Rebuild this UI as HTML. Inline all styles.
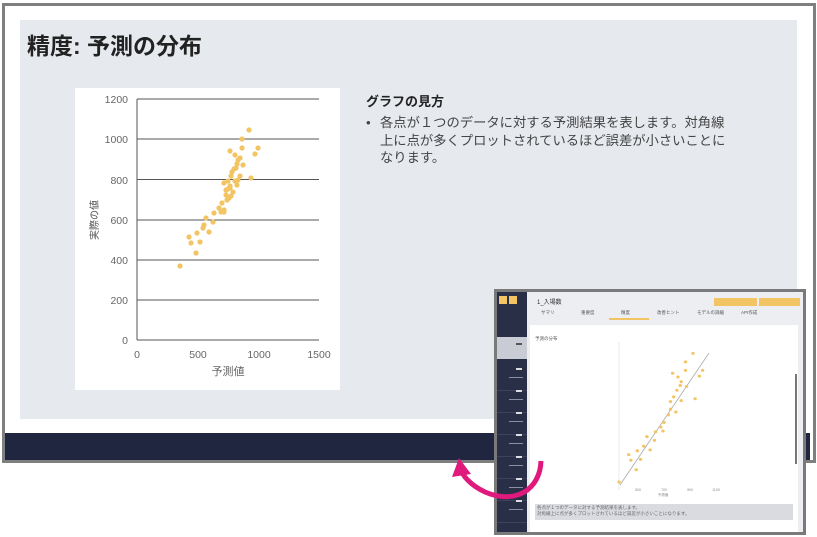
<!DOCTYPE html>
<html><head><meta charset="utf-8"><style>
body{margin:0;width:817px;height:537px;background:#fff;position:relative;overflow:hidden;font-family:"Liberation Sans","Noto Sans CJK JP",sans-serif}
.a{position:absolute}
.tab{position:absolute;top:18px;font-size:4.5px;color:#555}
.si{position:absolute;left:0;width:30px;height:31px;border-bottom:1px solid #3c4260}
.si b{position:absolute;right:5px;top:9px;width:6px;height:1.5px;background:#ddd}
.si i{position:absolute;right:4px;top:18px;width:14px;height:1px;background:#8a8fa5}
</style></head><body>
<div class="a" style="left:2px;top:3px;width:808px;height:454px;border:3px solid #7f7f7f;background:#fff"></div>
<div class="a" style="left:20px;top:20px;width:777px;height:399px;background:#e6e9ee"></div>
<div class="a" style="left:5px;top:433px;width:805px;height:27px;background:#202540"></div>
<div class="a" style="left:27px;top:27px;font-size:23px;font-weight:bold;color:#222">精度: 予測の分布</div>
<div class="a" style="left:75px;top:88px;width:265px;height:302px;background:#fff"></div>
<div class="a" style="left:366px;top:91px;font-size:13px;font-weight:bold;color:#222">グラフの見方</div>
<div class="a" style="left:366px;top:114px;font-size:13.3px;line-height:17.5px;color:#444;width:366px">
<span style="position:absolute;left:0">•</span><div style="margin-left:14px">各点が１つのデータに対する予測結果を表します。対角線上に点が多くプロットされているほど誤差が小さいことになります。</div></div>
<svg class="a" style="left:0;top:0" width="817" height="537">
<g stroke="#555" stroke-width="1">
<line x1="137" y1="99" x2="319" y2="99"/><line x1="137" y1="139" x2="319" y2="139"/><line x1="137" y1="179.5" x2="319" y2="179.5"/><line x1="137" y1="220" x2="319" y2="220"/><line x1="137" y1="260" x2="319" y2="260"/><line x1="137" y1="300" x2="319" y2="300"/><line x1="137" y1="340" x2="319" y2="340"/><line x1="137" y1="99" x2="137" y2="340"/>
</g>
<g font-size="10.5" fill="#666" text-anchor="end">
<text x="128" y="103">1200</text><text x="128" y="143">1000</text><text x="128" y="184">800</text><text x="128" y="224">600</text><text x="128" y="264">400</text><text x="128" y="304">200</text><text x="128" y="344">0</text></g>
<g font-size="10.5" fill="#666" text-anchor="middle">
<text x="137" y="358">0</text><text x="198" y="358">500</text><text x="259" y="358">1000</text><text x="319" y="358">1500</text>
<text x="228" y="375" font-size="11">予測値</text></g>
<text x="98" y="220" font-size="10" fill="#555" text-anchor="middle" transform="rotate(-90 98 220)">実際の値</text>
<g fill="#f2c464">
<circle cx="180" cy="266" r="2.6"/><circle cx="191" cy="243" r="2.6"/><circle cx="196" cy="253" r="2.6"/><circle cx="197" cy="233" r="2.6"/><circle cx="200" cy="242" r="2.6"/><circle cx="203" cy="228" r="2.6"/><circle cx="206" cy="218" r="2.6"/><circle cx="209" cy="232" r="2.6"/><circle cx="213" cy="222" r="2.6"/><circle cx="214" cy="213" r="2.6"/><circle cx="219" cy="208" r="2.6"/><circle cx="221" cy="212" r="2.6"/><circle cx="222" cy="203" r="2.6"/><circle cx="224" cy="210" r="2.6"/><circle cx="226" cy="195" r="2.6"/><circle cx="228" cy="189" r="2.6"/><circle cx="228" cy="181" r="2.6"/><circle cx="230" cy="186" r="2.6"/><circle cx="231" cy="176" r="2.6"/><circle cx="232" cy="172" r="2.6"/><circle cx="234" cy="169" r="2.6"/><circle cx="236" cy="168" r="2.6"/><circle cx="237" cy="164" r="2.6"/><circle cx="238" cy="160" r="2.6"/><circle cx="227" cy="200" r="2.6"/><circle cx="224" cy="212" r="2.6"/><circle cx="233" cy="192" r="2.6"/><circle cx="229" cy="198" r="2.6"/><circle cx="230" cy="188" r="2.6"/><circle cx="238" cy="180" r="2.6"/><circle cx="240" cy="176" r="2.6"/><circle cx="235" cy="155" r="2.6"/><circle cx="242" cy="148" r="2.6"/><circle cx="230" cy="151" r="2.6"/><circle cx="240" cy="158" r="2.6"/><circle cx="243" cy="165" r="2.6"/><circle cx="235" cy="181" r="2.6"/><circle cx="237" cy="185" r="2.6"/><circle cx="231" cy="196" r="2.6"/><circle cx="249" cy="130" r="2.6"/><circle cx="242" cy="139" r="2.6"/><circle cx="258" cy="148" r="2.6"/><circle cx="255" cy="154" r="2.6"/><circle cx="251" cy="178" r="2.6"/><circle cx="224" cy="183" r="2.6"/><circle cx="226" cy="190" r="2.6"/><circle cx="204" cy="225" r="2.6"/><circle cx="189" cy="237" r="2.6"/>
</g>
</svg>
<!-- overlay screenshot -->
<div class="a" style="left:494px;top:289px;width:306px;height:240px;border:3px solid #7a7a7a;background:#e8eaee;overflow:hidden">
 <div class="a" style="left:0;top:0;width:30px;height:240px;background:#2a2f48"></div>
 <div class="a" style="left:2px;top:4px;width:8px;height:8px;background:#f2c464"></div>
 <div class="a" style="left:12px;top:4px;width:8px;height:8px;background:#f2c464"></div>
 <div class="a" style="left:0;top:45px;width:30px;height:22px;background:#c9ccd4"><b style="position:absolute;right:5px;top:6px;width:6px;height:1.5px;background:#555"></b></div>
 <div class="si" style="top:67px"><b></b><i></i></div>
 <div class="si" style="top:89px"><b></b><i></i></div>
 <div class="si" style="top:111px"><b></b><i></i></div>
 <div class="si" style="top:133px"><b></b><i></i></div>
 <div class="si" style="top:155px"><b></b><i></i></div>
 <div class="si" style="top:177px"><b></b><i></i></div>
 <div class="si" style="top:199px"><b></b><i></i></div>
 <div class="a" style="left:30px;top:0;width:276px;height:240px;background:#eceef2"></div>
 <div class="a" style="left:40px;top:5px;font-size:6px;color:#333">1_入場数</div>
 <div class="a" style="left:217px;top:6px;width:43px;height:8px;background:#f2c464"></div>
 <div class="a" style="left:262px;top:6px;width:41px;height:8px;background:#f2c464"></div>
 <span class="tab" style="left:44px">サマリ</span><span class="tab" style="left:84px">重要度</span><span class="tab" style="left:124px">精度</span><span class="tab" style="left:160px">改善ヒント</span><span class="tab" style="left:200px">モデルの詳細</span><span class="tab" style="left:244px">API作成</span>
 <div class="a" style="left:112px;top:26px;width:40px;height:1.5px;background:#f2c464"></div>
 <div class="a" style="left:33px;top:33px;width:268px;height:207px;background:#fff"></div>
 <div class="a" style="left:38px;top:44px;font-size:4.5px;color:#555">予測の分布</div>
 <div class="a" style="left:298px;top:82px;width:2px;height:90px;background:#777"></div>
 <div class="a" style="left:38px;top:212px;width:258px;height:16px;background:#d9dbe0"></div>
 <div class="a" style="left:40px;top:213px;font-size:4.5px;line-height:6px;color:#666">各点が１つのデータに対する予測結果を表します。<br>対角線上に点が多くプロットされているほど誤差が小さいことになります。</div>
</div>
<svg class="a" style="left:0;top:0" width="817" height="537">
<line x1="619" y1="342" x2="619" y2="490" stroke="#ddd" stroke-width="0.6"/>
<line x1="620" y1="485" x2="709" y2="353" stroke="#aaa" stroke-width="0.8"/>
<g transform="matrix(1.071,0,0,0.946,426.3,230.4)" fill="#f2c464">
<circle cx="180" cy="266" r="1.6"/><circle cx="191" cy="243" r="1.6"/><circle cx="196" cy="253" r="1.6"/><circle cx="197" cy="233" r="1.6"/><circle cx="200" cy="242" r="1.6"/><circle cx="203" cy="228" r="1.6"/><circle cx="206" cy="218" r="1.6"/><circle cx="209" cy="232" r="1.6"/><circle cx="213" cy="222" r="1.6"/><circle cx="214" cy="213" r="1.6"/><circle cx="219" cy="208" r="1.6"/><circle cx="221" cy="212" r="1.6"/><circle cx="222" cy="203" r="1.6"/><circle cx="226" cy="195" r="1.6"/><circle cx="228" cy="189" r="1.6"/><circle cx="228" cy="181" r="1.6"/><circle cx="231" cy="176" r="1.6"/><circle cx="234" cy="169" r="1.6"/><circle cx="237" cy="164" r="1.6"/><circle cx="238" cy="160" r="1.6"/><circle cx="233" cy="192" r="1.6"/><circle cx="238" cy="180" r="1.6"/><circle cx="235" cy="155" r="1.6"/><circle cx="242" cy="148" r="1.6"/><circle cx="230" cy="151" r="1.6"/><circle cx="243" cy="165" r="1.6"/><circle cx="249" cy="130" r="1.6"/><circle cx="242" cy="139" r="1.6"/><circle cx="258" cy="148" r="1.6"/><circle cx="255" cy="154" r="1.6"/><circle cx="251" cy="178" r="1.6"/><circle cx="189" cy="237" r="1.6"/>
</g>
<g font-size="3.5" fill="#888" text-anchor="middle"><text x="638" y="491">500</text><text x="664" y="491">700</text><text x="690" y="491">900</text><text x="716" y="491">1100</text><text x="663" y="496">予測値</text></g>
<path d="M541 461 C540 490 515 505 485 492 C470 485 462 475 460 468" fill="none" stroke="#e0197d" stroke-width="5"/>
<polygon points="452,477 459,458 471,474" fill="#e0197d"/>
</svg>
</body></html>
